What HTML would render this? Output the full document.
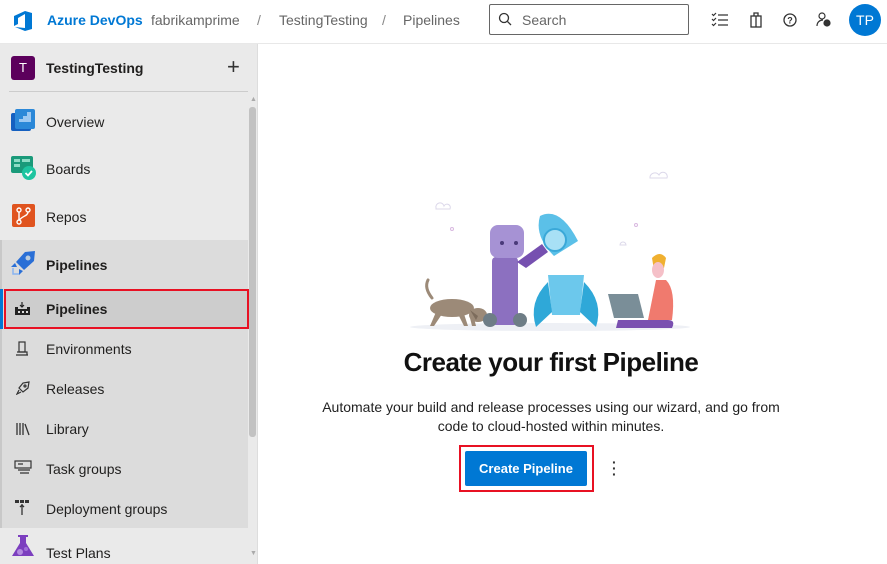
<!DOCTYPE html>
<html><head><style>
*{margin:0;padding:0;box-sizing:border-box}
body{width:887px;height:564px;overflow:hidden;font-family:"Liberation Sans","Segoe UI",sans-serif;background:#fff;position:relative;color:#201f1e}
.abs{position:absolute}
.hdr{left:0;top:0;width:887px;height:44px;border-bottom:1px solid #e8e8e8;background:#fff}
.side{left:0;top:44px;width:258px;height:520px;background:#eaeaea;border-right:1px solid #ddd}
.item{position:absolute;left:46px;font-size:14px;color:#201f1e}
.ico{position:absolute}
</style></head><body>
<div class="abs hdr">
 <svg class="abs" style="left:11px;top:9px" width="24" height="24" viewBox="0 0 24 24"><path d="M3 7 L14 2 L21 4 V20 L14 22 L4 18 L14 19 V5 L7 9 V15 L3 17Z" fill="#0078d4"/></svg>
 <div class="abs" style="left:47px;top:12px;font-size:14px;font-weight:bold;color:#0078d4">Azure DevOps</div>
 <div class="abs" style="left:151px;top:12px;font-size:14px;color:#666">fabrikamprime</div>
 <div class="abs" style="left:257px;top:12px;font-size:14px;color:#888">/</div>
 <div class="abs" style="left:279px;top:12px;font-size:14px;color:#666">TestingTesting</div>
 <div class="abs" style="left:382px;top:12px;font-size:14px;color:#888">/</div>
 <div class="abs" style="left:403px;top:12px;font-size:14px;color:#666">Pipelines</div>
 <div class="abs" style="left:489px;top:4px;width:200px;height:31px;border:1px solid #666;border-radius:2px"></div>
 <svg class="abs" style="left:498px;top:12px" width="14" height="14" viewBox="0 0 14 14"><circle cx="6" cy="6" r="4.5" fill="none" stroke="#333" stroke-width="1.3"/><path d="M9.5 9.5 L13 13" stroke="#333" stroke-width="1.3"/></svg>
 <div class="abs" style="left:522px;top:12px;font-size:14px;color:#666">Search</div>
 <svg class="abs" style="left:711px;top:11px" width="18" height="18" viewBox="0 0 18 18" fill="none" stroke="#333" stroke-width="1.2"><path d="M1 3l1.5 1.5L5 2M1 8l1.5 1.5L5 7M1 13l1.5 1.5L5 12M7 4h10M7 9h10M7 14h10"/></svg>
 <svg class="abs" style="left:749px;top:11px" width="14" height="18" viewBox="0 0 14 18" fill="none" stroke="#333" stroke-width="1.3"><rect x="2" y="5" width="10" height="11"/><path d="M5 5V2h4v3M7 5v11"/></svg>
 <svg class="abs" style="left:782px;top:12px" width="16" height="16" viewBox="0 0 16 16"><circle cx="8" cy="8" r="6" fill="none" stroke="#333" stroke-width="1.3"/><text x="8" y="11.5" font-size="9" text-anchor="middle" font-family="Liberation Sans" font-weight="bold" fill="#333">?</text></svg>
 <svg class="abs" style="left:816px;top:11px" width="16" height="18" viewBox="0 0 16 18" fill="none" stroke="#333" stroke-width="1.2"><circle cx="6" cy="5" r="3"/><path d="M1 15c0-4 3-6 6-6"/><circle cx="11" cy="12" r="3" fill="#333"/></svg>
 <div class="abs" style="left:849px;top:4px;width:32px;height:32px;border-radius:50%;background:#0078d4;color:#fff;font-size:14px;text-align:center;line-height:32px">TP</div>
</div>
<div class="abs side">
 <div class="abs" style="left:11px;top:12px;width:24px;height:24px;border-radius:3px;background:#5c005c;color:#fff;font-size:13px;text-align:center;line-height:24px">T</div>
 <div class="abs" style="left:46px;top:16px;font-size:14px;font-weight:bold">TestingTesting</div>
 <div class="abs" style="left:227px;top:10px;font-size:22px;font-weight:300;color:#333">+</div>
 <div class="abs" style="left:9px;top:47px;width:239px;height:1px;background:#ccc"></div>
 <svg class="ico" style="left:11px;top:64px" width="24" height="24" viewBox="0 0 24 24"><rect x="0" y="5" width="20" height="18" rx="2" fill="#1560c0"/><rect x="4" y="1" width="20" height="20" rx="2" fill="#2b88d8"/><path d="M8 14h12V4h-4v4h-4v3H8z" fill="#9cc8f2"/></svg>
 <div class="item" style="top:70px">Overview</div>
 <svg class="ico" style="left:11px;top:111px" width="25" height="26" viewBox="0 0 25 26"><rect x="0" y="1" width="22" height="17" rx="2" fill="#1a9a7a"/><path d="M3 4h6v3H3zM11 4h8v3h-8zM3 9h6v3H3z" fill="#8ddcc5"/><circle cx="18" cy="18" r="7" fill="#1ec4a0"/><path d="M14.5 18l2.5 2.5 4-4.5" stroke="#fff" stroke-width="1.8" fill="none"/></svg>
 <div class="item" style="top:117px">Boards</div>
 <svg class="ico" style="left:12px;top:160px" width="24" height="24" viewBox="0 0 24 24"><rect x="0" y="0" width="23" height="23" rx="2" fill="#e0541f"/><circle cx="7" cy="6" r="2" fill="none" stroke="#fff" stroke-width="1.4"/><circle cx="16" cy="6" r="2" fill="none" stroke="#fff" stroke-width="1.4"/><circle cx="7" cy="18" r="2" fill="none" stroke="#fff" stroke-width="1.4"/><path d="M7 8v8M16 8c0 4-6 4-8.5 8" stroke="#fff" stroke-width="1.4" fill="none"/></svg>
 <div class="item" style="top:165px">Repos</div>
 <div class="abs" style="left:0;top:196px;width:248px;height:288px;background:#dcdcdc"></div>
 <div class="abs" style="left:0;top:196px;width:2px;height:288px;background:#c8c8c8"></div>
 <svg class="ico" style="left:11px;top:207px" width="25" height="25" viewBox="0 0 25 25"><path d="M24 0 L14 1 L5 11 L13 19 L23 10Z" fill="#2a6fd6"/><path d="M4 12 L0 16 L6 16Z M12 20 L8 24 L8 18Z" fill="#2a6fd6"/><circle cx="17" cy="7" r="2.5" fill="#bcd"/><path d="M2 17 L2 23 L8 23" stroke="#8ab4f0" stroke-width="1.5" fill="none"/></svg>
 <div class="item" style="top:213px;font-weight:bold">Pipelines</div>
 <div class="abs" style="left:4px;top:245px;width:245px;height:40px;background:#cdcdcd;border:2px solid #e81123"></div>
 <div class="abs" style="left:0;top:245px;width:3px;height:40px;background:#0078d4"></div>
 <svg class="ico" style="left:15px;top:258px" width="15" height="14" viewBox="0 0 15 14"><path d="M7 0v5M5 3l2 2 2-2" stroke="#222" stroke-width="1.2" fill="none"/><rect x="0" y="7" width="15" height="6" fill="#222"/><rect x="0" y="5" width="3" height="3" fill="#222"/><rect x="12" y="5" width="3" height="3" fill="#222"/><rect x="3" y="9" width="2" height="2" fill="#ddd"/><rect x="7" y="9" width="2" height="2" fill="#ddd"/><rect x="11" y="9" width="2" height="2" fill="#ddd"/></svg>
 <div class="item" style="top:257px;font-weight:bold">Pipelines</div>
 <svg class="ico" style="left:15px;top:297px" width="14" height="15" viewBox="0 0 14 15" fill="none" stroke="#333" stroke-width="1.2"><rect x="4" y="1" width="6" height="10"/><path d="M1 14h12M2 11h10v3"/></svg>
 <div class="item" style="top:297px">Environments</div>
 <svg class="ico" style="left:16px;top:337px" width="14" height="14" viewBox="0 0 14 14" fill="none" stroke="#333" stroke-width="1.2"><path d="M13 1L7 2 3 7l4 4 5-4z"/><circle cx="9" cy="5" r="1"/><path d="M3 9l-2 4 4-2"/></svg>
 <div class="item" style="top:337px">Releases</div>
 <svg class="ico" style="left:15px;top:378px" width="16" height="14" viewBox="0 0 16 14" fill="none" stroke="#333" stroke-width="1.3"><path d="M2 1v12M5 1v12M8 1v12M10 2l4 11"/></svg>
 <div class="item" style="top:377px">Library</div>
 <svg class="ico" style="left:14px;top:416px" width="18" height="14" viewBox="0 0 18 14" fill="none" stroke="#333" stroke-width="1.2"><rect x="1" y="1" width="16" height="7"/><path d="M4 4h5M4 10h12M6 13h9"/></svg>
 <div class="item" style="top:417px">Task groups</div>
 <svg class="ico" style="left:15px;top:456px" width="14" height="16" viewBox="0 0 14 16"><rect x="0" y="0" width="4" height="3" fill="#333"/><rect x="5" y="0" width="4" height="3" fill="#333"/><rect x="10" y="0" width="4" height="3" fill="#333"/><path d="M7 4v11M5 7l2-2 2 2" stroke="#333" stroke-width="1.3" fill="none"/></svg>
 <div class="item" style="top:457px">Deployment groups</div>
 <svg class="ico" style="left:11px;top:490px" width="24" height="24" viewBox="0 0 24 24"><path d="M7 1h10v2h-2v6l8 13H1L9 9V3H7z" fill="#7c3fbf"/><circle cx="9" cy="18" r="3" fill="#b48be0"/><circle cx="15" cy="15" r="2" fill="#a070d8"/></svg>
 <div class="item" style="top:501px">Test Plans</div>
 <div class="abs" style="left:249px;top:63px;width:7px;height:330px;background:#c2c2c2;border-radius:3px"></div>
 <div class="abs" style="left:250px;top:52px;font-size:7px;color:#aaa">▲</div>
 <div class="abs" style="left:250px;top:506px;font-size:7px;color:#aaa">▼</div>
</div>
<svg class="abs" style="left:400px;top:170px" width="300" height="170" viewBox="0 0 300 170">
 <ellipse cx="150" cy="157" rx="140" ry="4" fill="#eef0f5"/>
 <path d="M250 7a5 5 0 0 1 9 -2a4 4 0 0 1 8 3h-17z" fill="none" stroke="#dcd8ea"/>
 <path d="M36 38a4 4 0 0 1 8-2a3 3 0 0 1 6 3h-14z" fill="none" stroke="#dcd8ea"/>
 <path d="M220 75a3 3 0 0 1 6 0h-6z" fill="none" stroke="#dcd8ea"/>
 <circle cx="52" cy="59" r="1.5" fill="none" stroke="#d8b8e0"/><circle cx="236" cy="55" r="1.5" fill="none" stroke="#d8b8e0"/>
 <!-- dog -->
 <path d="M32 128 q-8 -10 -4 -18" stroke="#9c8a78" stroke-width="3" fill="none" stroke-linecap="round"/>
 <ellipse cx="52" cy="138" rx="22" ry="9" fill="#9c8a78"/>
 <ellipse cx="78" cy="145" rx="9" ry="7" fill="#9c8a78"/>
 <path d="M70 140 l8 6 l-2 4z" fill="#7d6c5c"/>
 <path d="M36 142 l-6 14 h4 l8 -12z M58 144 l6 12 h4 l-4 -12z M70 148 l2 8 h4 l-2 -8z" fill="#9c8a78"/>
 <!-- robot -->
 <rect x="92" y="87" width="26" height="68" rx="4" fill="#8c70c0"/>
 <rect x="90" y="55" width="34" height="33" rx="8" fill="#a692d4"/>
 <circle cx="102" cy="73" r="2" fill="#4a3a7a"/><circle cx="116" cy="73" r="2" fill="#4a3a7a"/>
 <path d="M117 92 l25-18 l6 8 l-22 16z" fill="#7650b0"/>
 <circle cx="90" cy="150" r="7" fill="#6e7d86"/><circle cx="120" cy="150" r="7" fill="#6e7d86"/>
 <!-- rocket -->
 <path d="M140 46 q20-10 38 25 l-24 15 q-20-20-14-40z" fill="#5bc0e8"/>
 <circle cx="155" cy="70" r="11" fill="#a8e0f5" stroke="#3aa8d8" stroke-width="2"/>
 <path d="M148 105 h36 l-4 40 h-28z" fill="#6cc8ec"/>
 <path d="M148 112 q-20 20 -12 45 l16-15z M184 112 q20 20 12 45 l-16-15z" fill="#2fa8d8"/>
 <!-- person -->
 <path d="M252 88 q8-8 14 0 l-2 10 -10 2z" fill="#f0b030"/>
 <ellipse cx="258" cy="100" rx="6" ry="8" fill="#f5c0c8"/>
 <path d="M256 110 h10 q10 10 6 40 h-24z" fill="#f07a6e"/>
 <path d="M218 150 h50 q8 0 4 8 h-56z" fill="#7a50b0"/>
 <path d="M208 124 h30 l6 24 h-30z" fill="#7a8e98"/>
</svg>
<div class="abs" style="left:300px;top:347px;width:502px;text-align:center;font-size:26px;font-weight:bold;letter-spacing:-0.5px;color:#111">Create your first Pipeline</div>
<div class="abs" style="left:300px;top:398px;width:502px;text-align:center;font-size:14px;line-height:19px;color:#222">Automate your build and release processes using our wizard, and go from<br>code to cloud-hosted within minutes.</div>
<div class="abs" style="left:459px;top:445px;width:135px;height:47px;border:2px solid #e81123"></div>
<div class="abs" style="left:465px;top:451px;width:122px;height:35px;background:#0078d4;border-radius:2px;color:#fff;font-size:13px;font-weight:bold;text-align:center;line-height:35px">Create Pipeline</div>
<div class="abs" style="left:612px;top:459px;font-size:14px;font-weight:bold;color:#333;line-height:6px">·<br>·<br>·</div>
</body></html>
